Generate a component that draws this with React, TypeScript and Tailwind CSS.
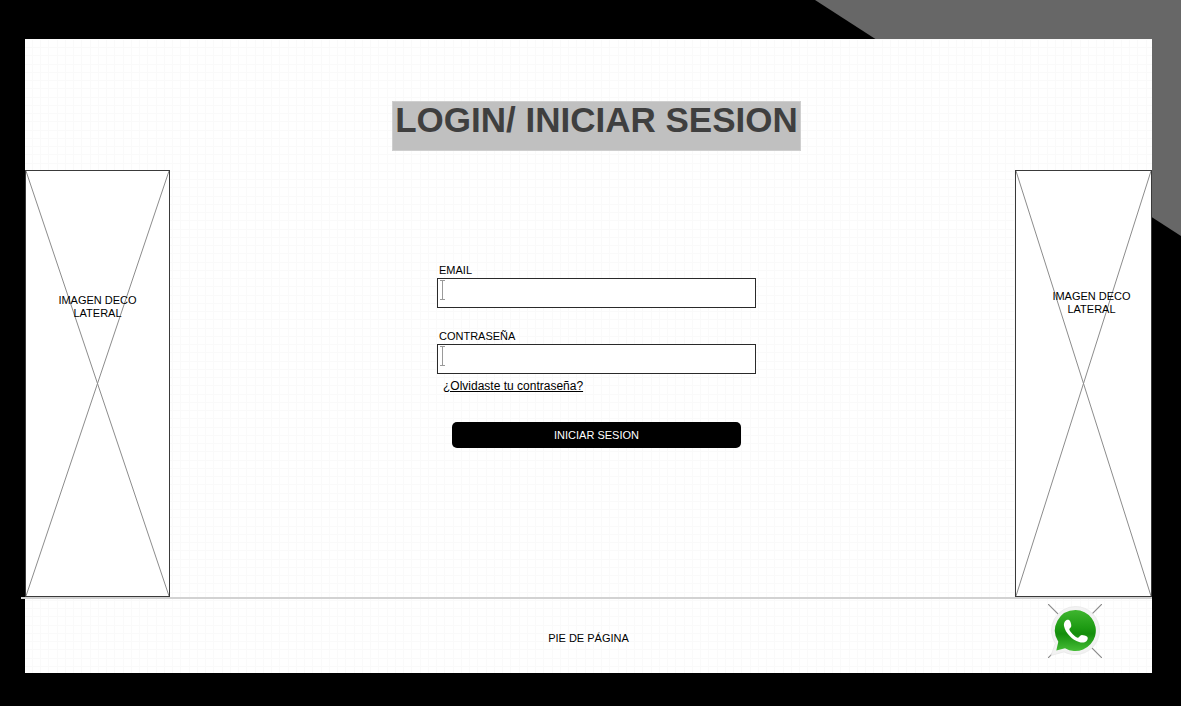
import React from "react";

type SideImageProps = { className?: string; captionClassName?: string };

function SideImage({ className = "", captionClassName = "" }: SideImageProps) {
  return (
    <aside className={`relative shrink-0 border border-[#3a3a3a] bg-white ${className}`}>
      <svg
        className="absolute inset-0 h-full w-full"
        viewBox="0 0 100 100"
        preserveAspectRatio="none"
        fill="none"
        stroke="#8c8c8c"
        aria-hidden="true"
      >
        <path d="M0 0 100 100M100 0 0 100" vectorEffect="non-scaling-stroke" />
      </svg>
      <p className={`relative text-center text-[11px] leading-[13px] ${captionClassName}`}>
        IMAGEN DECO
        <br />
        LATERAL
      </p>
    </aside>
  );
}

type FieldProps = { id: string; label: string; type: string; autoComplete: string };

function Field({ id, label, type, autoComplete }: FieldProps) {
  return (
    <div className="flex flex-col">
      <label htmlFor={id} className="pl-0.5 text-[11px] leading-4">
        {label}
      </label>
      <div className="relative">
        <input
          id={id}
          type={type}
          autoComplete={autoComplete}
          className="block h-[30px] w-full border border-[#2a2a2a] bg-white px-2 text-xs outline-none focus:border-black"
        />
        <svg
          className="pointer-events-none absolute left-[3px] top-[2px] h-5 w-[5px]"
          viewBox="0 0 5 20"
          fill="none"
          stroke="#9a9a9a"
          aria-hidden="true"
        >
          <path d="M0 .5H5M2.500 0V20M0 19.500H5" />
        </svg>
      </div>
    </div>
  );
}

function WhatsAppLogo() {
  return (
    <svg className="block h-[54px] w-[54px]" viewBox="0 0 54 54" aria-hidden="true">
      <defs>
        <linearGradient id="bubble" x1="0" y1="0" x2="0" y2="1">
          <stop offset="0" stopColor="#3fb52f" />
          <stop offset="0.45" stopColor="#1c9a12" />
          <stop offset="0.58" stopColor="#148d0c" />
          <stop offset="1" stopColor="#45bd36" />
        </linearGradient>
      </defs>
      <path d="M0 0 54 54M54 0 0 54" stroke="#8a8a8a" strokeWidth="1.2" fill="none" />
      <path
        d="M27.500 2.500a24 24 0 0 1 0 48c-4 0-8-.8-11.500-2.600L3 51.500l4.300-12A24 24 0 0 1 27.500 2.500Z"
        fill="#f2f2f2"
        stroke="#e6e6e6"
        strokeWidth="0.7"
      />
      <path
        d="M27.500 6a20.500 20.500 0 1 1-10.500 38.200L8.300 46.500l2-8.800A20.500 20.500 0 0 1 27.500 6Z"
        fill="url(#bubble)"
      />
      <path
        d="M18.200 16.300c1.200-.8 3.100-.6 3.800.8.8 1.700 1.500 3.800 1.200 5.400-.3 1.200-1.700 1.700-1.900 2.800-.2 1.600 6 8.200 8.200 8.500 1.500.2 2.400-3 4.400-2.900 1.700.1 4 .8 5.300 1.800 1.200 1 .3 3.300-.8 4.500-1.600 1.600-4.600 1.600-7.300.8C24.300 36 17.300 28.900 16 22c-.4-2.200.4-4.600 2.200-5.700Z"
        fill="#fff"
      />
    </svg>
  );
}

export default function App() {
  return (
    <div className="relative flex min-h-screen flex-col bg-black pt-[39px] pr-[29px] pb-[33px] pl-[25px] font-['Liberation_Sans',Arial,sans-serif] text-black">
      <svg
        className="absolute right-0 top-0 h-[236px] w-[366px]"
        viewBox="0 0 366 236"
        aria-hidden="true"
      >
        <path d="M0 0H366V236Z" fill="#676767" />
      </svg>

      <div className="relative flex flex-1 flex-col bg-white bg-[repeating-linear-gradient(90deg,transparent_0_7px,#fafafa_7px_8px,transparent_8px_15px,#fafafa_15px_16px,transparent_16px_23px,#fafafa_23px_24px,transparent_24px_32px,#fafafa_32px_33px),repeating-linear-gradient(180deg,#fafafa_0_1px,transparent_1px_8px,#fafafa_8px_9px,transparent_9px_16px,#fafafa_16px_17px,transparent_17px_25px,#fafafa_25px_26px,transparent_26px_33px)]">
        <header className="flex justify-center pt-[62px] pb-[19px] pl-4">
          <h1 className="border border-[#cfcfcf] bg-[#c0c0c0] px-0.5 pb-3 text-[35px] leading-9 font-bold text-[#3f3f3f]">
            LOGIN/ INICIAR SESION
          </h1>
        </header>

        <main className="flex flex-1">
          <SideImage className="w-[145px]" captionClassName="pt-[123px]" />

          <section className="flex flex-1 flex-col items-center pt-[92px] pl-2">
            <form
              className="flex w-full max-w-[319px] flex-col"
              onSubmit={(event: React.FormEvent) => event.preventDefault()}
            >
              <div className="flex flex-col gap-5">
                <Field id="email" label="EMAIL" type="email" autoComplete="email" />
                <Field
                  id="password"
                  label="CONTRASEÑA"
                  type="password"
                  autoComplete="current-password"
                />
              </div>
              <a href="#recuperar" className="mt-1 self-start pl-1.5 text-xs leading-4 underline">
                ¿Olvidaste tu contraseña?
              </a>
              <button
                type="submit"
                className="mx-[15px] mt-7 h-[26px] rounded-[5px] bg-black text-[11px] text-white"
              >
                INICIAR SESION
              </button>
            </form>
          </section>

          <SideImage className="w-[137px]" captionClassName="pt-[119px] pl-4" />
        </main>

        <hr className="-ml-1 border-0 border-t-2 border-[#d2d2d2]" />

        <footer className="grid grid-cols-[1fr_auto_1fr] items-start pt-[5px] pb-[15px]">
          <p className="col-start-2 pt-[26px] text-[11px] leading-4">PIE DE PÁGINA</p>
          <a href="#whatsapp" aria-label="WhatsApp" className="mr-[50px] justify-self-end">
            <WhatsAppLogo />
          </a>
        </footer>
      </div>
    </div>
  );
}
